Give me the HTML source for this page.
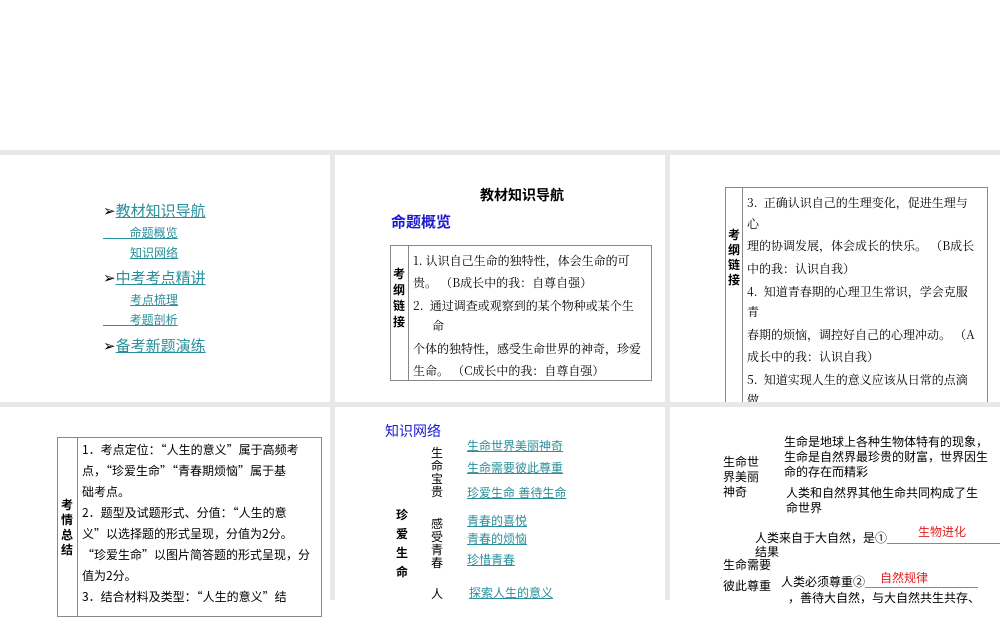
<!DOCTYPE html>
<html><head><meta charset="utf-8">
<style>
body{margin:0;width:1000px;height:600px;position:relative;overflow:hidden;background:#fff;font-family:"Liberation Sans","Noto Sans CJK SC",sans-serif;color:#000}
.g{position:absolute;background:#e8e8e8;z-index:10}
.t{position:absolute;white-space:nowrap;font-size:12px;line-height:14px}
.lk{color:#2a8f9a;text-decoration:underline}
.box{position:absolute;border:1px solid #888;box-sizing:border-box}
.vl{position:absolute;width:1px;background:#888}
.s{font-family:"Noto Serif CJK SC","Liberation Serif",serif}
.c{font-family:"Noto Sans CJK SC",sans-serif}
</style></head><body>
<div class="g" style="left:0;top:150px;width:1000px;height:5px"></div>
<div class="g" style="left:0;top:402px;width:1000px;height:5px"></div>
<div class="g" style="left:330px;top:150px;width:5px;height:450px"></div>
<div class="g" style="left:665px;top:150px;width:5px;height:450px"></div>

<!-- panel 1 -->
<div class="t" style="left:103px;top:203px;font-size:15px;line-height:18px">➢<span class="lk">教材知识导航</span></div>
<div class="t lk" style="left:103px;top:226px">&nbsp;&nbsp;&nbsp;&nbsp;&nbsp;&nbsp;&nbsp;&nbsp;命题概览</div>
<div class="t lk" style="left:130px;top:246px">知识网络</div>
<div class="t" style="left:103px;top:270px;font-size:15px;line-height:18px">➢<span class="lk">中考考点精讲</span></div>
<div class="t lk" style="left:130px;top:293px">考点梳理</div>
<div class="t lk" style="left:103px;top:313px">&nbsp;&nbsp;&nbsp;&nbsp;&nbsp;&nbsp;&nbsp;&nbsp;考题剖析</div>
<div class="t" style="left:103px;top:338px;font-size:15px;line-height:18px">➢<span class="lk">备考新题演练</span></div>

<!-- panel 2 -->
<div class="t" style="left:480px;top:187px;font-size:14px;line-height:16px;font-weight:bold">教材知识导航</div>
<div class="t" style="left:391px;top:214px;font-size:15px;line-height:18px;color:#1a1ad0;font-weight:bold">命题概览</div>
<div class="box" style="left:390px;top:245px;width:262px;height:136px"></div>
<div class="vl" style="left:408px;top:245px;height:136px"></div>
<div class="t" style="left:393px;top:266px;font-weight:bold;white-space:normal;width:12px;line-height:16px">考纲链接</div>
<div class="s">
<div class="t" style="left:413px;top:254px">1. 认识自己生命的独特性，体会生命的可</div>
<div class="t" style="left:413px;top:276px">贵。 （B成长中的我：自尊自强）</div>
<div class="t" style="left:413px;top:299px">2.&nbsp;&nbsp;通过调查或观察到的某个物种或某个生</div>
<div class="t" style="left:432px;top:319px">命</div>
<div class="t" style="left:413px;top:342px">个体的独特性，感受生命世界的神奇，珍爱</div>
<div class="t" style="left:413px;top:364px">生命。 （C成长中的我：自尊自强）</div>
</div>

<!-- panel 3 -->
<div class="box" style="left:725px;top:187px;width:263px;height:230px"></div>
<div class="vl" style="left:742px;top:187px;height:230px"></div>
<div class="t" style="left:728px;top:228px;font-weight:bold;white-space:normal;width:12px;line-height:15px">考纲链接</div>
<div class="s">
<div class="t" style="left:747px;top:196px">3.&nbsp;&nbsp;正确认识自己的生理变化，促进生理与</div>
<div class="t" style="left:747px;top:217px">心</div>
<div class="t" style="left:747px;top:239px">理的协调发展，体会成长的快乐。 （B成长</div>
<div class="t" style="left:747px;top:262px">中的我：认识自我）</div>
<div class="t" style="left:747px;top:285px">4.&nbsp;&nbsp;知道青春期的心理卫生常识，学会克服</div>
<div class="t" style="left:747px;top:305px">青</div>
<div class="t" style="left:747px;top:328px">春期的烦恼，调控好自己的心理冲动。 （A</div>
<div class="t" style="left:747px;top:350px">成长中的我：认识自我）</div>
<div class="t" style="left:747px;top:373px">5.&nbsp;&nbsp;知道实现人生的意义应该从日常的点滴</div>
<div class="t" style="left:747px;top:393px">做</div>
</div>
<div style="position:absolute;left:670px;top:407px;width:330px;height:15px;background:#fff;z-index:5"></div>

<!-- panel 4 -->
<div class="box" style="left:57px;top:437px;width:265px;height:180px"></div>
<div class="vl" style="left:77px;top:437px;height:180px"></div>
<div class="t" style="left:61px;top:498px;font-weight:bold;white-space:normal;width:12px;line-height:15px">考情总结</div>
<div class="c">
<div class="t" style="left:82px;top:443px">1．考点定位：“人生的意义”属于高频考</div>
<div class="t" style="left:82px;top:464px">点，“珍爱生命”“青春期烦恼”属于基</div>
<div class="t" style="left:82px;top:485px">础考点。</div>
<div class="t" style="left:82px;top:506px">2．题型及试题形式、分值：“人生的意</div>
<div class="t" style="left:82px;top:527px">义”以选择题的形式呈现，分值为2分。</div>
<div class="t" style="left:82px;top:548px">“珍爱生命”以图片简答题的形式呈现，分</div>
<div class="t" style="left:82px;top:569px">值为2分。</div>
<div class="t" style="left:82px;top:590px">3．结合材料及类型：“人生的意义”结</div>
</div>

<!-- panel 5 -->
<div class="t" style="left:385px;top:423px;font-size:14px;line-height:16px;color:#1a1ad0">知识网络</div>
<div class="t" style="left:431px;top:447px;white-space:normal;width:12px;line-height:13px">生命宝贵</div>
<div class="t" style="left:396px;top:506px;white-space:normal;width:12px;line-height:19px;font-weight:bold">珍爱生命</div>
<div class="t" style="left:431px;top:518px;white-space:normal;width:12px;line-height:13px">感受青春</div>
<div class="t" style="left:431px;top:587px">人</div>
<div class="t lk" style="left:467px;top:439px">生命世界美丽神奇</div>
<div class="t lk" style="left:467px;top:461px">生命需要彼此尊重</div>
<div class="t lk" style="left:467px;top:486px">珍爱生命 善待生命</div>
<div class="t lk" style="left:467px;top:514px">青春的喜悦</div>
<div class="t lk" style="left:467px;top:532px">青春的烦恼</div>
<div class="t lk" style="left:467px;top:553px">珍惜青春</div>
<div class="t lk" style="left:469px;top:586px">探索人生的意义</div>

<!-- panel 6 -->
<div class="t" style="left:784px;top:435px;line-height:15px">生命是地球上各种生物体特有的现象，<br>生命是自然界最珍贵的财富，世界因生<br>命的存在而精彩</div>
<div class="t" style="left:723px;top:455px;line-height:15px">生命世<br>界美丽<br>神奇</div>
<div class="t" style="left:786px;top:486px;line-height:15px">人类和自然界其他生命共同构成了生<br>命世界</div>
<div class="t" style="left:755px;top:531px;line-height:14px">人类来自于大自然，是①<br>结果</div>
<div style="position:absolute;left:887px;top:543px;width:113px;height:1px;background:#888"></div>
<div class="t" style="left:918px;top:525px;color:#e02020">生物进化</div>
<div class="t" style="left:723px;top:558px">生命需要</div>
<div class="t" style="left:723px;top:579px">彼此尊重</div>
<div class="t" style="left:781px;top:575px">人类必须尊重②</div>
<div style="position:absolute;left:865px;top:587px;width:113px;height:1px;background:#888"></div>
<div class="t" style="left:880px;top:571px;color:#e02020">自然规律</div>
<div class="t" style="left:788px;top:591px">，善待大自然，与大自然共生共存、</div>
</body></html>
